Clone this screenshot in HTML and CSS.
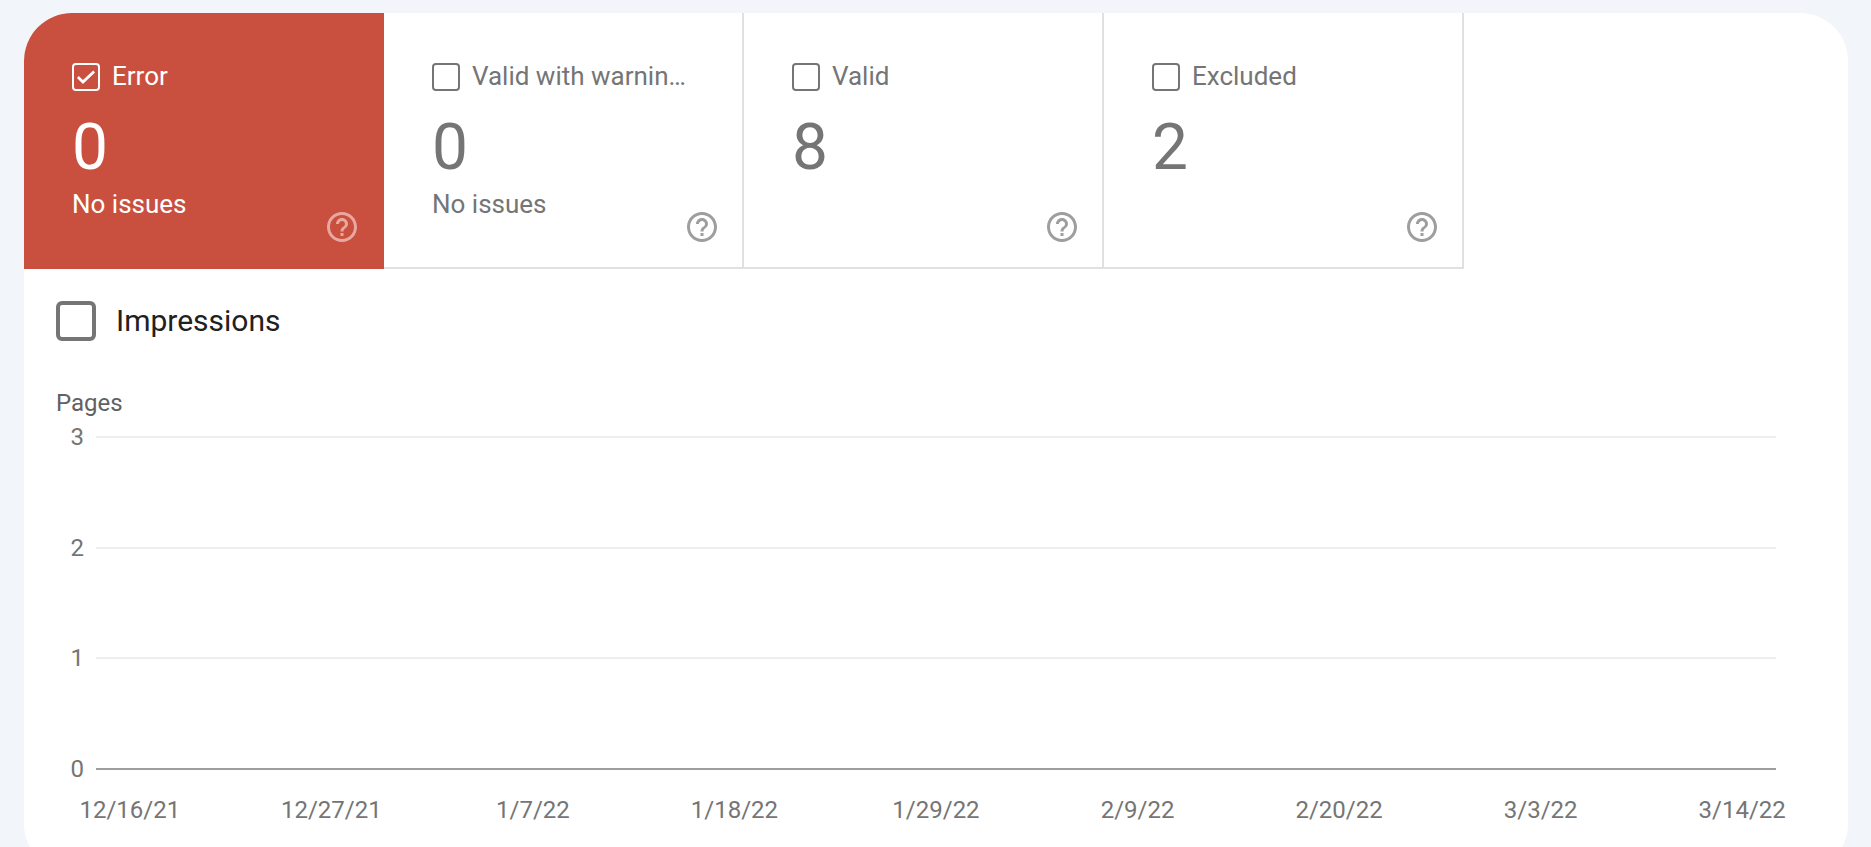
FILE: index.html
```html
<!DOCTYPE html>
<html lang="en">
<head>
    <meta charset="UTF-8">
    <meta name="viewport" content="width=device-width, initial-scale=1.0">
    <title>Coverage</title>
    <link rel="stylesheet" href="styles.css">
</head>
<body>
    <svg class="icon-defs" aria-hidden="true">
        <symbol id="help-icon" viewBox="0 0 24 24">
            <path d="M11 18h2v-2h-2v2zm1-16C6.48 2 2 6.48 2 12s4.480 10 10 10 10-4.480 10-10S17.520 2 12 2zm0 18c-4.410 0-8-3.590-8-8s3.590-8 8-8 8 3.590 8 8-3.590 8-8 8zm0-14c-2.210 0-4 1.790-4 4h2c0-1.100.9-2 2-2s2 .9 2 2c0 2-3 1.750-3 5h2c0-2.250 3-2.500 3-5 0-2.210-1.790-4-4-4z"/>
        </symbol>
    </svg>

    <main class="card">
        <div class="tiles">
            <section class="tile tile-error">
                <div class="tile-head">
                    <input type="checkbox" class="checkbox" id="error" checked>
                    <label class="tile-label" for="error">Error</label>
                </div>
                <p class="tile-count">0</p>
                <p class="tile-note">No issues</p>
                <button type="button" class="help-btn" aria-label="Help"><svg class="help-icon"><use href="#help-icon"/></svg></button>
            </section>
            <section class="tile">
                <div class="tile-head">
                    <input type="checkbox" class="checkbox" id="warnings">
                    <label class="tile-label" for="warnings">Valid with warnin…</label>
                </div>
                <p class="tile-count">0</p>
                <p class="tile-note">No issues</p>
                <button type="button" class="help-btn" aria-label="Help"><svg class="help-icon"><use href="#help-icon"/></svg></button>
            </section>
            <section class="tile">
                <div class="tile-head">
                    <input type="checkbox" class="checkbox" id="valid">
                    <label class="tile-label" for="valid">Valid</label>
                </div>
                <p class="tile-count">8</p>
                <button type="button" class="help-btn" aria-label="Help"><svg class="help-icon"><use href="#help-icon"/></svg></button>
            </section>
            <section class="tile">
                <div class="tile-head">
                    <input type="checkbox" class="checkbox" id="excluded">
                    <label class="tile-label" for="excluded">Excluded</label>
                </div>
                <p class="tile-count">2</p>
                <button type="button" class="help-btn" aria-label="Help"><svg class="help-icon"><use href="#help-icon"/></svg></button>
            </section>
        </div>

        <div class="impressions">
            <input type="checkbox" class="checkbox checkbox-large" id="impressions">
            <label for="impressions">Impressions</label>
        </div>

        <div class="chart">
            <p class="chart-title">Pages</p>
            <div class="chart-rows">
                <div class="chart-row"><span class="tick">3</span><span class="line"></span></div>
                <div class="chart-row"><span class="tick">2</span><span class="line"></span></div>
                <div class="chart-row"><span class="tick">1</span><span class="line"></span></div>
                <div class="chart-row"><span class="tick">0</span><span class="line line-base"></span></div>
            </div>
            <div class="dates">
                <span>12/16/21</span>
                <span>12/27/21</span>
                <span>1/7/22</span>
                <span>1/18/22</span>
                <span>1/29/22</span>
                <span>2/9/22</span>
                <span>2/20/22</span>
                <span>3/3/22</span>
                <span>3/14/22</span>
            </div>
        </div>
    </main>
</body>
</html>
```
FILE: styles.css
```css
* {
    box-sizing: border-box;
}

body {
    margin: 0;
    padding: 13px 23px 0 24px;
    height: 100vh;
    overflow: hidden;
    background-color: #f2f6fb;
    color: #757575;
    font-family: Roboto, sans-serif;
    font-size: 24px;
    line-height: 32px;
}

p {
    margin: 0;
}

.icon-defs {
    display: none;
}

.card {
    background-color: #fff;
    border-radius: 48px;
    overflow: hidden;
    padding-bottom: 46px;
}

/* status tiles */
.tiles {
    display: flex;
}

.tile {
    position: relative;
    width: 360px;
    height: 256px;
    padding: 50px 48px 0;
    border-right: 2px solid #e0e0e0;
    border-bottom: 2px solid #e0e0e0;
    font-size: 26px;
}

.tile-error {
    background-color: #c9503f;
    border-color: #c9503f;
    color: #fff;
}

.tile-head {
    display: flex;
    align-items: flex-start;
    gap: 12px;
}

.tile-label {
    line-height: 26px;
    white-space: nowrap;
}

.tile-count {
    font-size: 64px;
    line-height: 80px;
    margin-top: 17px;
}

.help-btn {
    position: absolute;
    right: 22px;
    bottom: 22px;
    width: 36px;
    height: 36px;
    padding: 0;
    border: none;
    background: none;
    color: inherit;
    cursor: pointer;
}

.help-icon {
    display: block;
    width: 36px;
    height: 36px;
    fill: #9e9e9e;
}

.tile-error .help-icon {
    fill: #e8a79f;
}

/* checkboxes */
.checkbox {
    appearance: none;
    flex: none;
    display: grid;
    place-items: center;
    width: 28px;
    height: 28px;
    margin: 0;
    border: 2px solid currentColor;
    border-radius: 4px;
    color: inherit;
}

.checkbox:checked::before {
    content: "";
    width: 18px;
    height: 14px;
    background-color: currentColor;
    clip-path: polygon(0 58%, 10% 43%, 33% 71%, 90% 4%, 100% 18%, 33% 100%);
}

.checkbox-large {
    width: 40px;
    height: 40px;
    border-width: 4px;
    border-radius: 6px;
    color: #757575;
}

.impressions {
    display: flex;
    align-items: center;
    gap: 20px;
    padding: 32px 32px 0;
    color: #212121;
    font-size: 30px;
}

/* chart */
.chart-title {
    padding: 46px 32px 0;
    color: #616161;
}

.chart-rows {
    display: flex;
    flex-direction: column;
    justify-content: space-between;
    height: 364px;
    margin-top: 2px;
    padding: 0 72px 0 46px;
}

.chart-row {
    display: flex;
    align-items: center;
    gap: 12px;
}

.tick {
    width: 14px;
    text-align: right;
}

.line {
    flex: 1;
    height: 2px;
    background-color: #eee;
}

.line-base {
    background-color: #9e9e9e;
}

.dates {
    display: grid;
    grid-template-columns: repeat(9, 1fr);
    margin-top: 9px;
    padding: 0 5px;
    text-align: center;
}
```
